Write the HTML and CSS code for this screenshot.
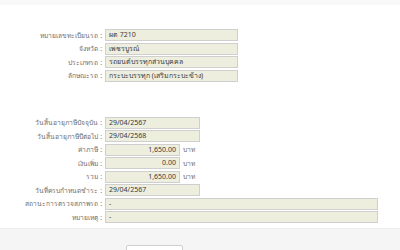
FILE: index.html
```html
<!DOCTYPE html>
<html lang="th">
<head>
  <meta charset="UTF-8" />
  <title>ข้อมูลภาษีรถ</title>
  <link rel="stylesheet" href="styles.css">
</head>
<body>
  <div class="topbar"></div>

  <div class="form">
    <div class="group">
      <div class="row"><span class="label">หมายเลขทะเบียนรถ :</span><span class="box wide">ผต 7210</span></div>
      <div class="row"><span class="label">จังหวัด :</span><span class="box wide">เพชรบูรณ์</span></div>
      <div class="row"><span class="label">ประเภทรถ :</span><span class="box wide">รถยนต์บรรทุกส่วนบุคคล</span></div>
      <div class="row"><span class="label">ลักษณะรถ :</span><span class="box wide">กระบะบรรทุก (เสริมกระบะข้าง)</span></div>
    </div>

    <div class="group second">
      <div class="row"><span class="label">วันสิ้นอายุภาษีปัจจุบัน :</span><span class="box date">29/04/2567</span></div>
      <div class="row"><span class="label">วันสิ้นอายุภาษีปีต่อไป :</span><span class="box date">29/04/2568</span></div>
      <div class="row"><span class="label">ค่าภาษี :</span><span class="box money">1,650.00</span><span class="unit">บาท</span></div>
      <div class="row"><span class="label">เงินเพิ่ม :</span><span class="box money">0.00</span><span class="unit">บาท</span></div>
      <div class="row"><span class="label">รวม :</span><span class="box money">1,650.00</span><span class="unit">บาท</span></div>
      <div class="row"><span class="label">วันที่ครบกำหนดชำระ :</span><span class="box date">29/04/2567</span></div>
      <div class="row"><span class="label">สถานะการตรวจสภาพรถ :</span><span class="box full">-</span></div>
      <div class="row"><span class="label">หมายเหตุ :</span><span class="box full">-</span></div>
    </div>
  </div>

  <div class="footer">
    <button class="btn" type="button"></button>
  </div>
</body>
</html>
```

FILE: styles.css
```css
html, body {
  height: 250px;
  overflow: hidden;
}

body {
  margin: 0;
  padding: 0;
  background: #ffffff;
  font-family: Tahoma, "Noto Sans", "DejaVu Sans", sans-serif;
  font-size: 7px;
  color: #555;
}

.topbar {
  height: 5px;
  background-color: #f9f9f9;
}

.form {
  padding-top: 24px;
}

.group {
  display: flex;
  flex-direction: column;
  gap: 1.5px;
}

.second {
  margin-top: 35px;
}

.row {
  display: flex;
  align-items: center;
  height: 12px;
}

.label {
  width: 102px;
  text-align: right;
  font-size: 6.7px;
  color: #707070;
  white-space: nowrap;
}

.box {
  box-sizing: border-box;
  height: 12px;
  line-height: 10px;
  margin-left: 3px;
  padding: 0 3px;
  background-color: #eeeedf;
  border: 1px solid #cfcfcf;
  color: #3a3a3a;
  white-space: nowrap;
}

.wide {
  width: 133px;
}

.date {
  width: 95px;
}

.money {
  width: 75px;
  text-align: right;
}

.full {
  width: 273px;
}

.unit {
  margin-left: 3px;
  font-size: 6.7px;
  color: #707070;
}

.footer {
  margin-top: 5px;
  height: 30px;
  background-color: #f5f5f5;
  border-top: 1px solid #eeeeee;
  padding-left: 126px;
  padding-top: 16px;
}

.btn {
  display: block;
  width: 57px;
  height: 20px;
  background: #ffffff;
  border: 1px solid #cfcfcf;
  border-radius: 2px;
}
```
